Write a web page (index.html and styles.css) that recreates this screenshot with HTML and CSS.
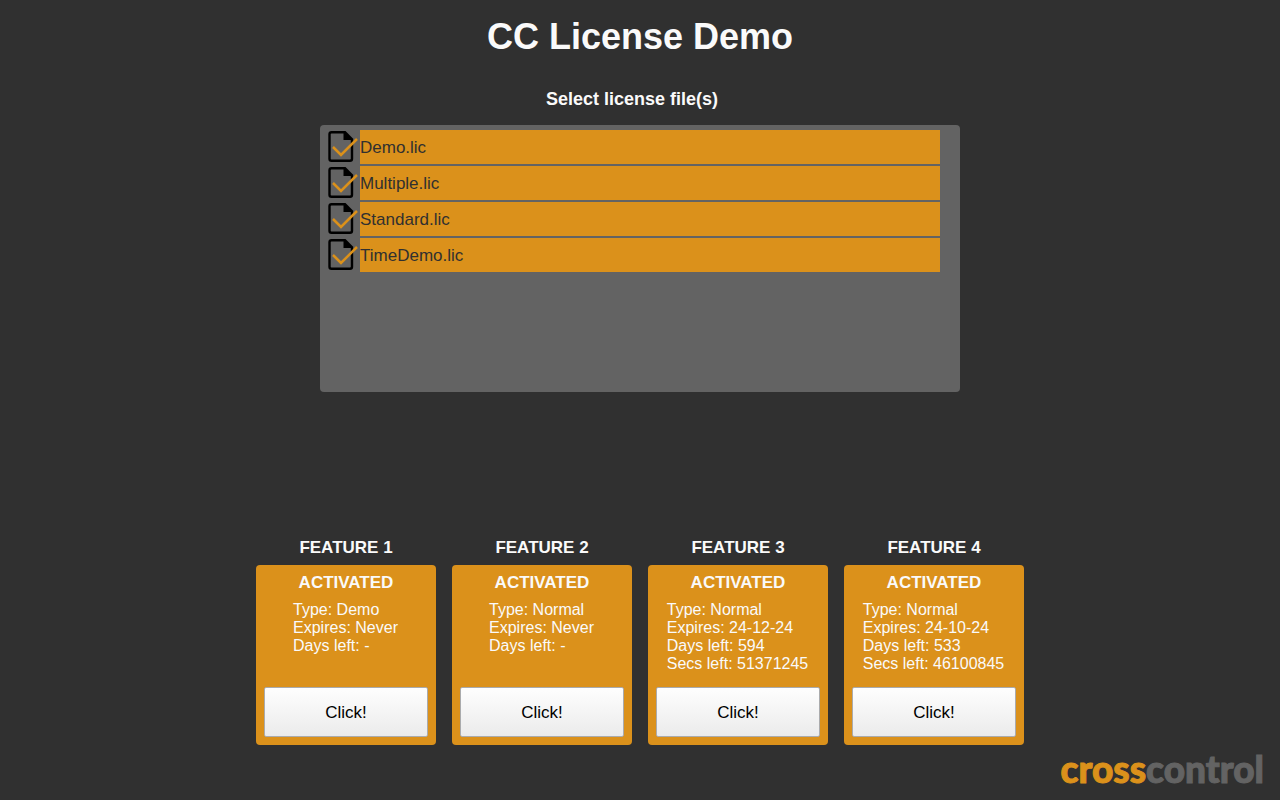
FILE: index.html
```html
<!DOCTYPE html>
<html lang="en">
<head>
<meta charset="utf-8">
<meta name="viewport" content="width=device-width, initial-scale=1">
<title>CC License Demo</title>
<link rel="stylesheet" href="styles.css">
</head>
<body>
<svg class="defs" aria-hidden="true">
  <symbol id="file-check" viewBox="0 0 32 34">
    <path d="M16.500 2.200H3.500Q1.500 2.200 1.500 4.200V28.800Q1.500 30.800 3.500 30.800H22Q24 30.800 24 28.800V10" fill="none" stroke="#000" stroke-width="2.400"/>
    <path d="M15.500 1H17.500L25.200 8.700V10H15.500Z" fill="#000"/>
    <path d="M5 17L13 25L29 9" fill="none" stroke="#db911b" stroke-width="2.500"/>
  </symbol>
</svg>
<main class="page">
  <h1 class="title">CC License Demo</h1>
  <h2 class="subtitle" id="files-label">Select license file(s)</h2>
  <ul class="files" aria-labelledby="files-label">
    <li class="file"><svg class="file-icon" aria-hidden="true"><use href="#file-check"/></svg><button class="file-name" type="button" aria-pressed="true">Demo.lic</button></li>
    <li class="file"><svg class="file-icon" aria-hidden="true"><use href="#file-check"/></svg><button class="file-name" type="button" aria-pressed="true">Multiple.lic</button></li>
    <li class="file"><svg class="file-icon" aria-hidden="true"><use href="#file-check"/></svg><button class="file-name" type="button" aria-pressed="true">Standard.lic</button></li>
    <li class="file"><svg class="file-icon" aria-hidden="true"><use href="#file-check"/></svg><button class="file-name" type="button" aria-pressed="true">TimeDemo.lic</button></li>
  </ul>
  <div class="features">
    <section class="feature">
      <h3 class="feature-name">FEATURE 1</h3>
      <div class="card">
        <strong class="status">ACTIVATED</strong>
        <p class="info">Type: Demo<br>Expires: Never<br>Days left: -</p>
        <button class="action" type="button">Click!</button>
      </div>
    </section>
    <section class="feature">
      <h3 class="feature-name">FEATURE 2</h3>
      <div class="card">
        <strong class="status">ACTIVATED</strong>
        <p class="info">Type: Normal<br>Expires: Never<br>Days left: -</p>
        <button class="action" type="button">Click!</button>
      </div>
    </section>
    <section class="feature">
      <h3 class="feature-name">FEATURE 3</h3>
      <div class="card">
        <strong class="status">ACTIVATED</strong>
        <p class="info">Type: Normal<br>Expires: 24-12-24<br>Days left: 594<br>Secs left: 51371245</p>
        <button class="action" type="button">Click!</button>
      </div>
    </section>
    <section class="feature">
      <h3 class="feature-name">FEATURE 4</h3>
      <div class="card">
        <strong class="status">ACTIVATED</strong>
        <p class="info">Type: Normal<br>Expires: 24-10-24<br>Days left: 533<br>Secs left: 46100845</p>
        <button class="action" type="button">Click!</button>
      </div>
    </section>
  </div>
  <footer class="footer"><span class="logo"><span class="logo-cross">cross</span>control</span></footer>
</main>
</body>
</html>
```
FILE: styles.css
```css
* {
  box-sizing: border-box;
}

body {
  margin: 0;
  background: #303030;
  color: #fafafa;
  font-family: "Liberation Sans", Arial, sans-serif;
}

.defs {
  position: absolute;
  width: 0;
  height: 0;
}

.page {
  display: flex;
  flex-direction: column;
  align-items: center;
  min-height: 100vh;
  padding-top: 17px;
}

.title {
  margin: 0;
  font-size: 36px;
  line-height: 40px;
}

.subtitle {
  margin: 31px 0 0;
  padding-right: 16px;
  font-size: 18px;
  line-height: 22px;
}

.files {
  display: flex;
  flex-direction: column;
  gap: 2px;
  width: 50%;
  min-height: 33.33vh;
  margin: 15px 0 32px;
  padding: 5px 20px 5px 8px;
  border-radius: 4px;
  background: #636363;
  list-style: none;
}

.file {
  display: flex;
}

.file-icon {
  flex: none;
  width: 32px;
  height: 34px;
}

.file-name {
  flex: 1;
  height: 34px;
  padding: 2px 0 0;
  border: 0;
  background: #db911b;
  color: #303030;
  font: inherit;
  font-size: 17px;
  text-align: left;
}

.features {
  display: flex;
  flex-wrap: wrap;
  justify-content: center;
  gap: 16px;
  margin-top: auto;
}

.feature {
  width: 180px;
}

.feature-name {
  margin: 0 0 7px;
  font-size: 17px;
  line-height: 20px;
  text-align: center;
}

.card {
  display: flex;
  flex-direction: column;
  align-items: center;
  min-height: 180px;
  padding: 8px;
  border-radius: 4px;
  background: #db911b;
}

.status {
  font-size: 17px;
  line-height: 20px;
}

.info {
  margin: 8px 0 0;
  padding-right: 1px;
  font-size: 16px;
  line-height: 18px;
}

.action {
  width: 100%;
  height: 50px;
  margin-top: auto;
  padding: 2px 0 0;
  border: 1px solid #aaabad;
  border-radius: 2px;
  background: linear-gradient(#fefefe, #ebebeb);
  color: #000;
  font: inherit;
  font-size: 17px;
}

.footer {
  display: flex;
  align-self: stretch;
  justify-content: flex-end;
  align-items: flex-start;
  height: 55px;
  padding: 4px 16px 0 0;
}

.logo {
  color: #636363;
  font-family: Lato, sans-serif;
  font-size: 37px;
  font-weight: 900;
  line-height: 40px;
  -webkit-text-stroke: 1px currentColor;
}

.logo-cross {
  color: #db911b;
}
```
